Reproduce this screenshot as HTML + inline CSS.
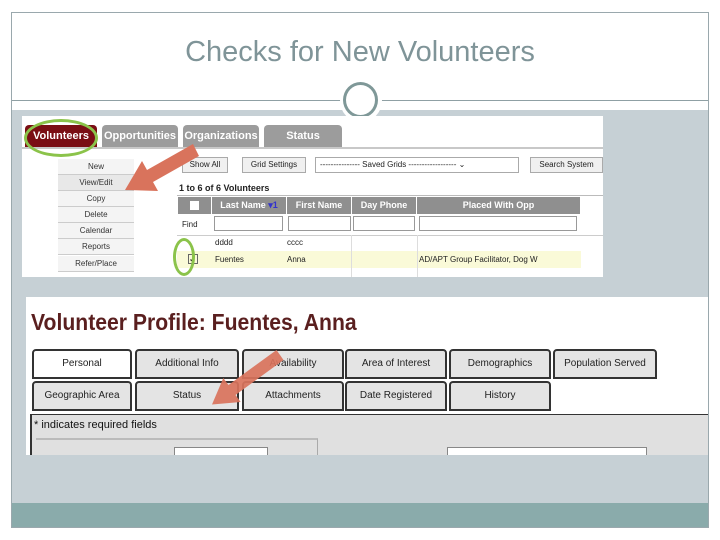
<!DOCTYPE html>
<html><head><meta charset="utf-8"><style>
*{margin:0;padding:0;box-sizing:border-box}
body{width:720px;height:540px;background:#fff;position:relative;overflow:hidden;font-family:"Liberation Sans",sans-serif}
.abs{position:absolute}
.slide{left:11px;top:12px;width:698px;height:516px;border:1px solid #9aa8ad}
.tab{position:absolute;top:9px;height:22px;background:#9c9c9c;color:#fff;font-weight:bold;font-size:11px;text-align:center;line-height:22px;border-radius:4px 4px 0 0}
.mb{position:absolute;left:36px;width:76px;height:16px;font-size:8px;text-align:center;line-height:16px;color:#333;border-bottom:1px solid #ccc;background:#f4f4f4}
.btn{position:absolute;top:41px;height:16px;border:1px solid #aaa;background:#f0f0f0;font-size:8px;line-height:14px;text-align:center;color:#222}
.th{position:absolute;top:81px;height:17px;background:#8f8f8f;color:#fff;font-weight:bold;font-size:9px;line-height:17px;text-align:center;border-right:1px solid #fff}
.inp{position:absolute;top:100px;height:15px;border:1px solid #999;background:#fff}
.td{position:absolute;font-size:8px;color:#222}
.pt{position:absolute;height:30px;border:2px solid #333;border-radius:4px 4px 0 0;background:#e4e4e4;font-size:10px;text-align:center;line-height:26px;color:#222}
</style></head><body>
<div class="abs slide"></div>
<div class="abs" style="left:0;top:36px;width:720px;text-align:center;font-size:29px;color:#7f9498">Checks for New Volunteers</div>
<div class="abs" style="left:12px;top:100px;width:696px;height:1px;background:#8fa0a4"></div>
<div class="abs" style="left:12px;top:110px;width:696px;height:393px;background:#c6d0d5"></div>
<div class="abs" style="left:12px;top:503px;width:696px;height:24px;background:#8aabab"></div>
<div class="abs" style="left:340px;top:80px;width:42px;height:42px;background:#fff;border-radius:50%"></div>
<div class="abs" style="left:343px;top:82px;width:35px;height:36px;border:3px solid #7f9898;border-radius:50%;background:#fff"></div>

<!-- screenshot 1 -->
<div class="abs" style="left:22px;top:116px;width:581px;height:161px;background:#fff;overflow:hidden">
 <div class="tab" style="left:3px;width:72px;background:#7a0e14">Volunteers</div>
 <div class="tab" style="left:80px;width:76px">Opportunities</div>
 <div class="tab" style="left:161px;width:76px">Organizations</div>
 <div class="tab" style="left:242px;width:78px">Status</div>
 <div class="abs" style="left:0;top:31px;width:581px;height:2px;background:#c8c8c8"></div>
 <div class="mb" style="top:43px">New</div>
 <div class="mb" style="top:59px;background:#e8e8e8">View/Edit</div>
 <div class="mb" style="top:75px">Copy</div>
 <div class="mb" style="top:91px">Delete</div>
 <div class="mb" style="top:107px">Calendar</div>
 <div class="mb" style="top:123px">Reports</div>
 <div class="mb" style="top:140px">Refer/Place</div>
 <div class="btn" style="left:160px;width:46px">Show All</div>
 <div class="btn" style="left:220px;width:64px">Grid Settings</div>
 <div class="btn" style="left:293px;width:204px;background:#fff;text-align:left;padding-left:4px">--------------- Saved Grids ------------------ ⌄</div>
 <div class="btn" style="left:508px;width:73px">Search System</div>
 <div class="td" style="left:157px;top:67px;font-weight:bold;font-size:9px">1 to 6 of 6 Volunteers</div>
 <div class="abs" style="left:155px;top:79px;width:426px;height:1px;background:#bbb"></div>
 <div class="th" style="left:156px;width:34px"><span style="display:inline-block;width:9px;height:9px;background:#fff;margin-top:4px"></span></div>
 <div class="th" style="left:190px;width:75px">Last Name <span style="color:#33c">▾1</span></div>
 <div class="th" style="left:265px;width:65px">First Name</div>
 <div class="th" style="left:330px;width:65px">Day Phone</div>
 <div class="th" style="left:395px;width:164px">Placed With Opp</div>
 <div class="td" style="left:160px;top:104px">Find</div>
 <div class="inp" style="left:192px;width:69px"></div>
 <div class="inp" style="left:266px;width:63px"></div>
 <div class="inp" style="left:331px;width:62px"></div>
 <div class="inp" style="left:397px;width:158px"></div>
 <div class="abs" style="left:155px;top:119px;width:426px;height:1px;background:#ccc"></div>
 <div class="td" style="left:193px;top:122px">dddd</div><div class="td" style="left:265px;top:122px">cccc</div>
 <div class="abs" style="left:155px;top:135px;width:404px;height:17px;background:#fafad8"></div>
 <div class="td" style="left:166px;top:138px;border:1px solid #666;width:10px;height:10px;line-height:9px;font-size:9px">✓</div>
 <div class="td" style="left:193px;top:139px">Fuentes</div><div class="td" style="left:265px;top:139px">Anna</div>
 <div class="td" style="left:397px;top:139px">AD/APT Group Facilitator, Dog W</div>
 <div class="abs" style="left:329px;top:119px;width:1px;height:42px;background:#ddd"></div>
 <div class="abs" style="left:395px;top:119px;width:1px;height:42px;background:#ddd"></div>
</div>
<div class="abs" style="left:24px;top:119px;width:74px;height:38px;border:3px solid #8bc34a;border-radius:50%"></div>
<div class="abs" style="left:173px;top:238px;width:22px;height:38px;border:3px solid #8bc34a;border-radius:50%"></div>

<!-- screenshot 2 -->
<div class="abs" style="left:26px;top:297px;width:682px;height:158px;background:#fff;overflow:hidden">
 <div class="abs" style="left:5px;top:12px;font-size:23px;font-weight:bold;color:#5a1f1f;transform:scaleX(0.92);transform-origin:left;white-space:nowrap">Volunteer Profile: Fuentes, Anna</div>
 <div class="pt" style="left:6px;top:52px;width:100px;background:#fff">Personal</div>
 <div class="pt" style="left:109px;top:52px;width:104px">Additional Info</div>
 <div class="pt" style="left:216px;top:52px;width:102px">Availability</div>
 <div class="pt" style="left:319px;top:52px;width:102px">Area of Interest</div>
 <div class="pt" style="left:423px;top:52px;width:102px">Demographics</div>
 <div class="pt" style="left:527px;top:52px;width:104px">Population Served</div>
 <div class="pt" style="left:6px;top:84px;width:100px">Geographic Area</div>
 <div class="pt" style="left:109px;top:84px;width:104px">Status</div>
 <div class="pt" style="left:216px;top:84px;width:102px">Attachments</div>
 <div class="pt" style="left:319px;top:84px;width:102px">Date Registered</div>
 <div class="pt" style="left:423px;top:84px;width:102px">History</div>
 <div class="abs" style="left:4px;top:117px;width:680px;height:45px;background:#e0e0e0;border-left:2px solid #333;border-top:1px solid #333"></div>
 <div class="abs" style="left:8px;top:122px;font-size:11px;color:#111">* indicates required fields</div>
 <div class="abs" style="left:10px;top:141px;width:282px;height:20px;border-top:2px solid #bbb;border-right:1px solid #aaa"></div>
 <div class="abs" style="left:148px;top:150px;width:94px;height:12px;border:1px solid #888;background:#fff"></div>
 <div class="abs" style="left:421px;top:150px;width:200px;height:12px;border:1px solid #888;background:#fff"></div>
</div>
<svg class="abs" style="left:0;top:0" width="720" height="540">
 <polygon points="193,144 199,156 153,182 158,191 125,190 142,161 147,170" fill="#d9735c"/>
 <polygon points="276.5,350 283.5,360 235.5,395 240.7,402 212,404.5 223.3,378 228.5,385" fill="#d9735c" opacity="0.92"/>
</svg>
</body></html>
